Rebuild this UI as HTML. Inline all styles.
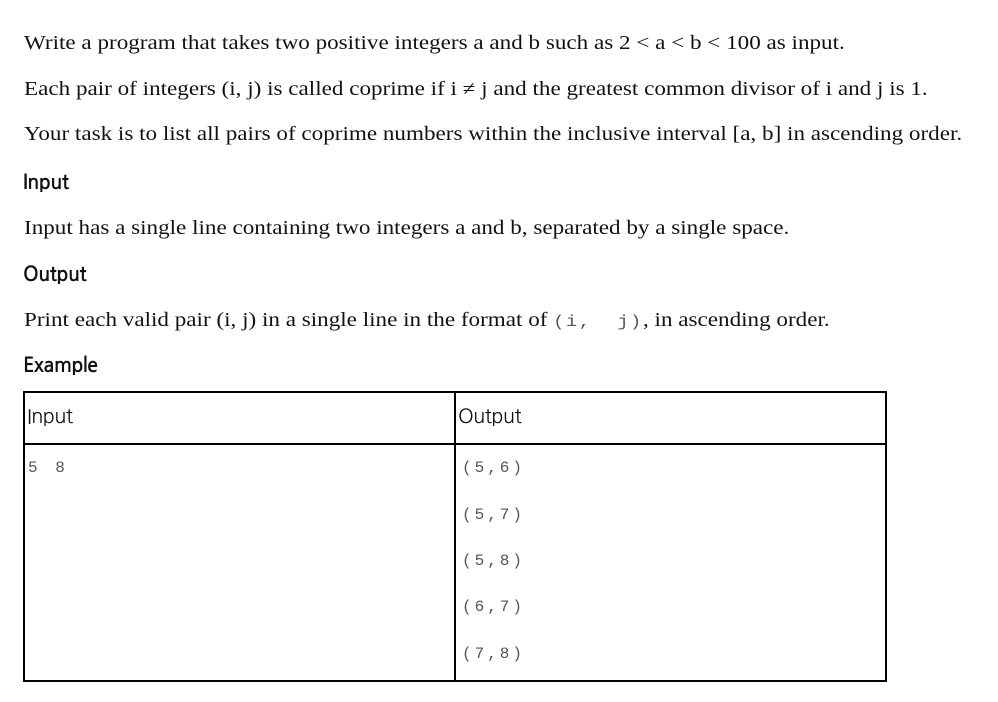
<!DOCTYPE html>
<html><head><style>
body{margin:0;background:#fff;width:998px;height:702px;position:relative;overflow:hidden}
.p{position:absolute;left:24px;font-family:"Liberation Serif",serif;font-size:20px;color:#111;white-space:nowrap;line-height:24px;transform:scaleX(1.155);transform-origin:0 0}
.h{position:absolute;left:23px;font-family:"NanumGothic","Liberation Sans",sans-serif;font-weight:bold;font-size:20px;color:#111;line-height:24px;letter-spacing:-0.6px}
code{font-family:"Liberation Mono",monospace;color:#555;font-size:16px;letter-spacing:1.5px}
.tb{position:absolute;border:2px solid #000;box-sizing:border-box}
.c{position:absolute;font-family:"Liberation Mono",monospace;color:#555;font-size:16px;letter-spacing:3px;line-height:20px}
</style></head><body>
<div class="p" style="top:31px">Write a program that takes two positive integers a and b such as 2 &lt; a &lt; b &lt; 100 as input.</div>
<div class="p" style="top:77px">Each pair of integers (i, j) is called coprime if i ≠ j and the greatest common divisor of i and j is 1.</div>
<div class="p" style="top:122px">Your task is to list all pairs of coprime numbers within the inclusive interval [a, b] in ascending order.</div>
<div class="h" style="top:170px">Input</div>
<div class="p" style="top:216px">Input has a single line containing two integers a and b, separated by a single space.</div>
<div class="h" style="top:262px">Output</div>
<div class="p" style="top:308px">Print each valid pair (i, j) in a single line in the format of <code>(i,&nbsp; j)</code>, in ascending order.</div>
<div class="h" style="top:353px">Example</div>
<div class="tb" style="left:23px;top:391px;width:864px;height:291px"></div>
<div class="tb" style="left:23px;top:391px;width:864px;height:54px"></div>
<div style="position:absolute;left:454px;top:391px;width:2px;height:290px;background:#000"></div>
<div class="h" style="left:27px;top:404px;font-weight:normal">Input</div>
<div class="h" style="left:458px;top:404px;font-weight:normal">Output</div>
<div class="c" style="left:28px;top:458px;letter-spacing:4px">5 8</div>
<div class="c" style="left:462px;top:458px">(5,6)</div>
<div class="c" style="left:462px;top:505px">(5,7)</div>
<div class="c" style="left:462px;top:551px">(5,8)</div>
<div class="c" style="left:462px;top:597px">(6,7)</div>
<div class="c" style="left:462px;top:644px">(7,8)</div>
</body></html>
